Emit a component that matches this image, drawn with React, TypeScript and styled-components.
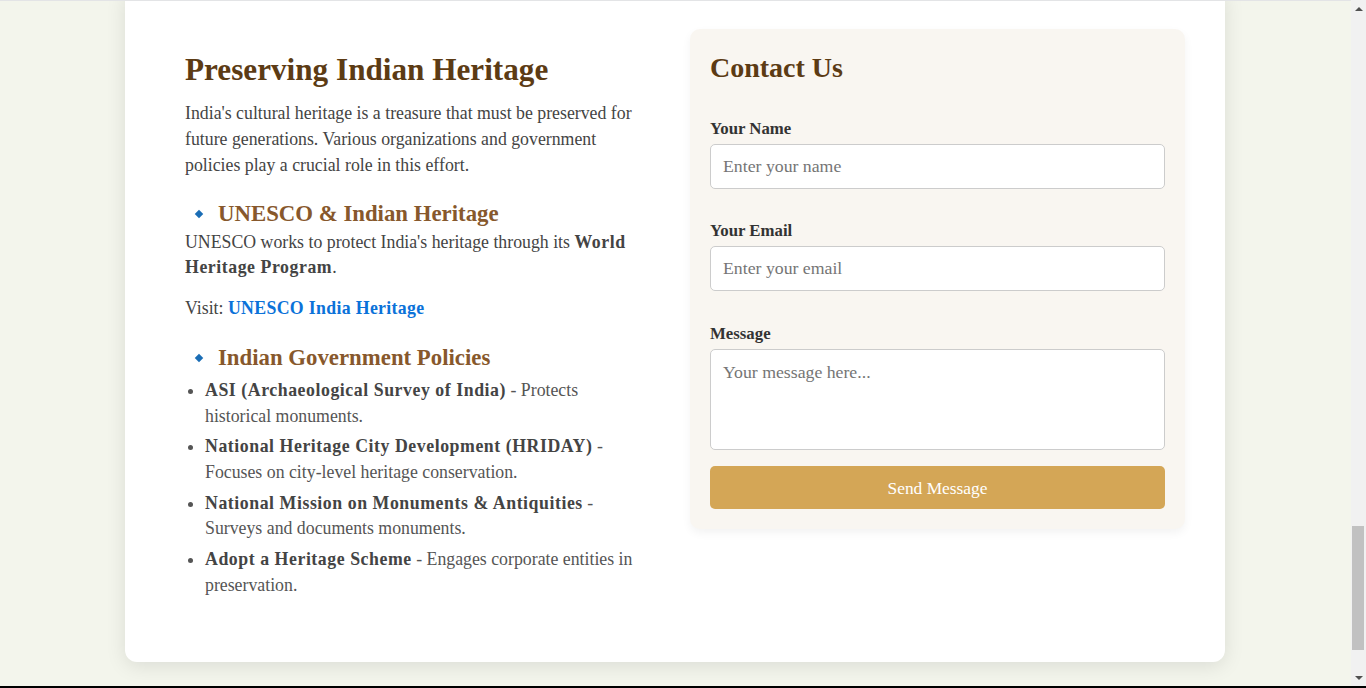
import React from "react";
import styled, { createGlobalStyle } from "styled-components";

const Global = createGlobalStyle`
  html, body { margin: 0; padding: 0; height: 100%; overflow: hidden; }
  body { font-family: "Liberation Serif", "DejaVu Serif", serif; color: #444; }
  #root { height: 100%; }
`;

const Frame = styled.div`
  display: flex;
  height: 688px;
  box-sizing: border-box;
  border-bottom: 2px solid #000;
  overflow: hidden;
`;

const Page = styled.main`
  flex: 1;
  min-width: 0;
  background: #f3f5ec;
  border-top: 1px solid #e3e4e6;
  display: flex;
  flex-direction: column;
  justify-content: flex-end;
  padding: 0 1px 24px 0;
  overflow: hidden;
`;

const Card = styled.section`
  flex-shrink: 0;
  align-self: center;
  width: 1100px;
  box-sizing: border-box;
  background: #fff;
  border-radius: 12px;
  padding: 40px;
  box-shadow: 0 4px 20px rgba(0, 0, 0, 0.1);
  display: grid;
  grid-template-columns: 1fr 1fr;
  gap: 30px;
  align-items: start;
`;

const InfoColumn = styled.div`
  padding: 23px 20px 5.6px;
  font-size: 17.8px;
  line-height: 25.6px;
  strong { letter-spacing: 0.55px; }
`;

const Title = styled.h2`
  margin: 0 0 13px;
  font-size: 31.2px;
  line-height: 36px;
  font-weight: 700;
  color: #5c3b14;
`;

const Para = styled.p<{ $gap?: number }>`
  margin: 0 0 ${(p) => p.$gap ?? 15}px;
  color: #444;
`;

const SubTitle = styled.h3`
  margin: 22px 0 1px;
  font-size: 22.8px;
  line-height: 28.6px;
  font-weight: 700;
  color: #87582c;
  &::before {
    content: "";
    display: inline-block;
    width: 6px;
    height: 6px;
    background: #1a6db5;
    transform: rotate(45deg);
    margin: 0 16px 0 11px;
    vertical-align: 4px;
  }
`;

const Link = styled.a`
  color: #0b72d9;
  font-weight: 700;
  letter-spacing: 0.33px;
  text-decoration: none;
`;

const PolicyList = styled.ul`
  margin: 6px 0 18px;
  padding-left: 20px;
  color: #555;
`;

const PolicyItem = styled.li`
  margin-bottom: 5.2px;
  &::marker { color: #555; }
  strong { color: #444; }
`;

const ContactBox = styled.div`
  background: #f9f6f1;
  border-radius: 10px;
  padding: 20px;
  box-shadow: 0 4px 10px rgba(0, 0, 0, 0.05);
  display: flex;
  flex-direction: column;
`;

const ContactTitle = styled.h2`
  margin: 2px 0 31.9px;
  font-size: 28px;
  line-height: 33.6px;
  font-weight: 700;
  color: #5c3b14;
`;

const Field = styled.div`
  display: flex;
  flex-direction: column;
  margin-bottom: 30.5px;
  &:last-of-type { margin-bottom: 16px; }
`;

const Label = styled.label`
  font-size: 16.8px;
  line-height: 24px;
  font-weight: 700;
  color: #333;
  margin-bottom: 3px;
`;

const Input = styled.input`
  height: 45px;
  box-sizing: border-box;
  border: 1px solid #ccc;
  border-radius: 5px;
  padding: 0 12px;
  font-family: inherit;
  font-size: 17.75px;
  background: #fff;
  outline: none;
  &::placeholder { color: #757575; }
`;

const TextArea = styled.textarea`
  height: 101px;
  box-sizing: border-box;
  border: 1px solid #ccc;
  border-radius: 5px;
  padding: 12px 12px 10px;
  font-family: inherit;
  font-size: 17.75px;
  background: #fff;
  resize: none;
  outline: none;
  &::placeholder { color: #757575; }
`;

const SendButton = styled.button`
  height: 43px;
  border: none;
  border-radius: 5px;
  background: #d4a656;
  color: #fff;
  font-family: inherit;
  font-size: 17.4px;
  padding: 2px 0 0;
  cursor: pointer;
`;

const ScrollBar = styled.div`
  width: 15px;
  flex-shrink: 0;
  background: #f1f1f1;
  display: flex;
  flex-direction: column;
`;

const ArrowButton = styled.div<{ $down?: boolean }>`
  height: 17px;
  display: flex;
  align-items: center;
  justify-content: center;
  &::after {
    content: "";
    width: 0;
    height: 0;
    border-left: 4px solid transparent;
    border-right: 4px solid transparent;
    ${(p) => (p.$down ? "border-top: 4px solid #505050;" : "border-bottom: 4px solid #505050;")}
  }
`;

const Track = styled.div`
  flex: 1;
  display: flex;
  flex-direction: column;
`;

const Thumb = styled.div<{ $offset: number; $size: number }>`
  margin: ${(p) => p.$offset}px 2px 0 1px;
  height: ${(p) => p.$size}px;
  background: #c1c1c1;
`;

export default function App() {
  return (
    <>
      <Global />
      <Frame>
        <Page>
          <Card>
            <InfoColumn>
              <Title>Preserving Indian Heritage</Title>
              <Para $gap={0}>
                India's cultural heritage is a treasure that must be preserved for future
                generations. Various organizations and government policies play a crucial
                role in this effort.
              </Para>
              <SubTitle>UNESCO &amp; Indian Heritage</SubTitle>
              <Para>
                UNESCO works to protect India's heritage through its{" "}
                <strong>World Heritage Program</strong>.
              </Para>
              <Para $gap={0}>
                Visit: <Link href="#">UNESCO India Heritage</Link>
              </Para>
              <SubTitle>Indian Government Policies</SubTitle>
              <PolicyList>
                <PolicyItem>
                  <strong>ASI (Archaeological Survey of India)</strong> - Protects historical
                  monuments.
                </PolicyItem>
                <PolicyItem>
                  <strong>National Heritage City Development (HRIDAY)</strong> - Focuses on
                  city-level heritage conservation.
                </PolicyItem>
                <PolicyItem>
                  <strong>National Mission on Monuments &amp; Antiquities</strong> - Surveys
                  and documents monuments.
                </PolicyItem>
                <PolicyItem>
                  <strong>Adopt a Heritage Scheme</strong> - Engages corporate entities in
                  preservation.
                </PolicyItem>
              </PolicyList>
            </InfoColumn>
            <ContactBox>
              <ContactTitle>Contact Us</ContactTitle>
              <Field>
                <Label htmlFor="name">Your Name</Label>
                <Input id="name" type="text" placeholder="Enter your name" />
              </Field>
              <Field>
                <Label htmlFor="email">Your Email</Label>
                <Input id="email" type="email" placeholder="Enter your email" />
              </Field>
              <Field>
                <Label htmlFor="message">Message</Label>
                <TextArea id="message" placeholder="Your message here..." />
              </Field>
              <SendButton type="button">Send Message</SendButton>
            </ContactBox>
          </Card>
        </Page>
        <ScrollBar>
          <ArrowButton />
          <Track>
            <Thumb $offset={509} $size={124} />
          </Track>
          <ArrowButton $down />
        </ScrollBar>
      </Frame>
    </>
  );
}
